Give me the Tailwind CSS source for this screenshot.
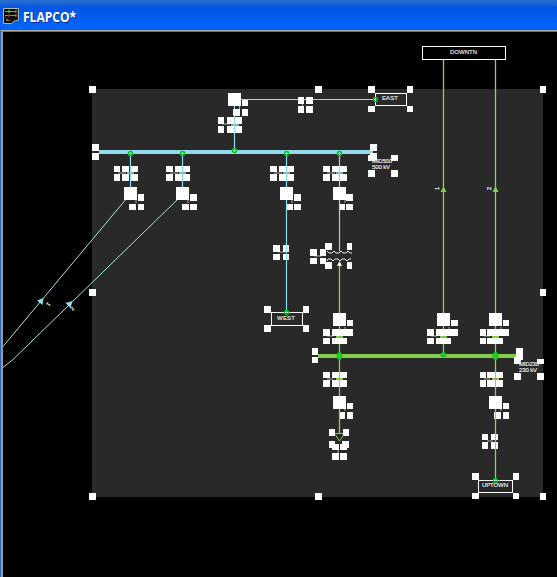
<!DOCTYPE html>
<html lang="en">
<head>
<meta charset="utf-8">
<title>FLAPCO*</title>
<script src="https://cdn.jsdelivr.net/npm/@tailwindcss/browser@4"></script>
</head>
<body class="w-[557px] h-[577px] overflow-hidden bg-black flex flex-col font-['Liberation_Sans',sans-serif]">
<header class="h-[30px] shrink-0 flex items-center pl-[3px] pt-[2px] bg-linear-to-b from-[#2a70ce] from-0% via-[#0355e4] via-25% to-[#0263fb] to-90%">
  <svg class="w-4 h-4" viewBox="0 0 16 16">
    <path d="M.5.5h15v11.500l-4 1-3 2.500h-8z" fill="#0c0c0a" stroke="#c9c7b4" stroke-width=".9"/>
    <path d="M2 3.500h11M2 7.500h11" stroke="#8b8b84"/>
    <path d="M12.500 2l1.500 1.500-1.500 1.500M12.500 6l1.500 1.500-1.500 1.500" stroke="#999" fill="none"/>
    <path d="M2 9l2.500 4M3 12.500h5" stroke="#5b5223"/>
    <circle cx="6" cy="3.500" r="1.200" fill="#00f020"/><circle cx="6" cy="7.500" r="1.200" fill="#f01818"/><circle cx="4.500" cy="12" r="1" fill="#b48a18"/>
  </svg>
  <h1 class="ml-1 mt-0.5 origin-left scale-x-[0.86] font-['Open_Sans','Noto_Sans',sans-serif] text-[14px] leading-4 font-bold text-white [text-shadow:1px_1px_0_#0a2f94]">FLAPCO*</h1>
</header>
<main class="flex-1 min-h-0 flex border-t border-l border-l-[#2b62bd] border-t-[#a9a8a0]">
<div class="flex-1 flex border-t border-l-2 border-l-[#a09b91] border-t-[#77746a]">
<svg class="w-[554px] h-[545px] block" viewBox="3 32 554 545" font-family="Liberation Sans, sans-serif" font-size="6" fill="#eee">
  <rect x="92" y="89" width="451" height="408" fill="#292929"/>
  <!-- 500 kV lines -->
  <g stroke="#8adcf0" fill="none" stroke-width="1.200">
    <path d="M234.500 152V99.500H376M130.500 152V190M182.500 152V190M286.500 152V313M339.500 152V251"/>
    <path d="M127 198L3 346.500M178 199L13 359.500 3 367.500" stroke="#a2e2da" stroke-width="1"/>
  </g>
  <rect x="99" y="150" width="274" height="4" fill="#91d9e8"/>
  <!-- 230 kV lines -->
  <path d="M443.500 60V355M495.500 60V480M339.500 264V433" stroke="#84d84e" stroke-width="1.300" fill="none"/>
  <rect x="318" y="354" width="200" height="4" fill="#83cb4c"/>
  <!-- station boxes -->
  <g stroke="#fff" fill="none" shape-rendering="crispEdges">
    <rect x="422.500" y="46.500" width="83" height="13" fill="#000"/>
    <rect x="375.500" y="93.500" width="31" height="12"/>
    <rect x="271.500" y="312.500" width="31" height="13"/>
    <rect x="478.500" y="480.500" width="34" height="12"/>
  </g>
  <!-- label leaders -->
  <path d="M222 124h8M302.500 102v4M239.500 106v3M118 173h8M170 173h8M274 173h8M327 173h8M136 200v3M188 200v3M292 200v3M345 200v3M278 252h7M314 256h8M327 336h6M327 379h6M431 336h6M484 336h6M484 379h6M345 327v2M449 327v2M501 327v2M345 408v3M501 408v3M487 441h6M338 450v3" stroke="#aaa" fill="none"/>
  <g fill="#fff" shape-rendering="crispEdges">
    <!-- selection handles -->
    <path d="M89 86h7v7h-7zM315 86h7v7h-7zM540 86h6v7h-6zM89 289h7v7h-7zM540 289h6v7h-6zM89 493h7v7h-7zM315 493h7v7h-7zM540 493h6v7h-6z"/>
    <!-- east branch -->
    <path d="M228 93h13v13h-13zM242 100h6v6h-6zM233 109h7v7h-7zM242 109h6v7h-6zM218 117h6v7h-6zM227 117h7v7h-7zM235 117h7v7h-7zM218 126h6v7h-6zM227 126h7v7h-7zM235 126h7v7h-7zM298 97h6v7h-6zM306 97h7v7h-7zM298 106h6v7h-6zM306 106h7v7h-7z"/>
    <path d="M368 86h7v7h-7zM407 86h6v7h-6zM368 106h7v6h-7zM407 106h6v6h-6z"/>
    <!-- 500 kV bus -->
    <path d="M92 144h7v7h-7zM92 153h7v7h-7zM370 144h7v7h-7zM370 153h7v7h-7zM368 155h7v6h-7zM391 155h7v6h-7zM368 170h7v7h-7zM391 170h7v7h-7z"/>
    <path d="M114 166h6v6h-6zM122 166h7v6h-7zM131 166h7v6h-7zM114 174h6v7h-6zM122 174h7v7h-7zM131 174h7v7h-7zM124 187h13v13h-13zM138 194h6v7h-6zM129 204h7v6h-7zM138 204h6v6h-6z"/>
    <path d="M166 166h7v6h-7zM175 166h7v6h-7zM183 166h7v6h-7zM166 174h7v7h-7zM175 174h7v7h-7zM183 174h7v7h-7zM176 187h13v13h-13zM190 194h7v7h-7zM182 204h7v6h-7zM190 204h7v6h-7z"/>
    <path d="M270 166h7v6h-7zM279 166h7v6h-7zM287 166h7v6h-7zM270 174h7v7h-7zM279 174h7v7h-7zM287 174h7v7h-7zM280 187h13v13h-13zM294 194h7v7h-7zM287 204h6v6h-6zM294 204h7v6h-7z"/>
    <path d="M323 166h7v6h-7zM332 166h7v6h-7zM340 166h7v6h-7zM323 174h7v7h-7zM332 174h7v7h-7zM340 174h7v7h-7zM333 187h13v13h-13zM346 194h7v7h-7zM340 204h5v6h-5zM346 204h7v6h-7z"/>
    <!-- west and transformer -->
    <path d="M273 245h7v7h-7zM283 245h6v7h-6zM273 254h7v6h-7zM283 254h6v6h-6zM264 306h7v7h-7zM303 306h6v7h-6zM264 325h7v7h-7zM303 325h6v7h-6z"/>
    <path d="M310 249h7v7h-7zM320 249h6v7h-6zM310 258h7v6h-7zM320 258h6v6h-6zM325 243h7v7h-7zM347 243h5v7h-5zM325 262h7v7h-7zM347 262h5v7h-5z"/>
    <!-- 230 kV upper breakers -->
    <path d="M333 313h13v13h-13zM347 320h6v6h-6zM323 329h7v7h-7zM332 329h21v7h-21zM323 338h7v6h-7zM332 338h15v6h-15z"/>
    <path d="M437 313h13v13h-13zM451 320h7v6h-7zM427 329h7v7h-7zM436 329h22v7h-22zM427 338h7v6h-7zM436 338h15v6h-15z"/>
    <path d="M489 313h13v13h-13zM503 320h6v6h-6zM480 329h6v7h-6zM487 329h22v7h-22zM480 338h6v6h-6zM487 338h16v6h-16z"/>
    <path d="M312 348h6v7h-6zM312 357h6v6h-6zM516 348h7v7h-7zM516 355h7v5h-7zM514 357h7v7h-7zM537 359h7v5h-7zM514 373h7v7h-7zM537 373h7v7h-7z"/>
    <!-- 230 kV lower breakers -->
    <path d="M323 372h7v6h-7zM332 372h7v6h-7zM340 372h7v6h-7zM323 380h7v7h-7zM332 380h7v7h-7zM340 380h7v7h-7zM333 396h13v13h-13zM347 403h6v6h-6zM340 412h5v7h-5zM347 412h6v7h-6z"/>
    <path d="M480 372h6v6h-6zM487 372h8v6h-8zM496 372h7v6h-7zM480 380h6v7h-6zM487 380h8v7h-8zM496 380h7v7h-7zM489 396h13v13h-13zM503 403h6v6h-6zM496 412h5v7h-5zM503 412h6v7h-6zM494 412h1v7h-1z"/>
    <path d="M329 429h6v7h-6zM343 429h6v7h-6zM329 441h6v7h-6zM342 441h7v7h-7zM332 444h7v6h-7zM340 444h7v6h-7zM332 453h7v7h-7zM340 453h7v7h-7z"/>
    <path d="M482 434h6v6h-6zM491 434h4v6h-4zM496 434h2v6h-2zM482 442h6v7h-6zM491 442h4v7h-4zM496 442h2v7h-2zM472 473h7v7h-7zM513 473h6v7h-6zM472 493h7v6h-7zM513 493h6v6h-6z"/>
  </g>
  <!-- breaker crossings -->
  <path d="M231 125h8M127 173h7M179 173h7M283 173h7M336 173h7" stroke="#91d9e8" stroke-width="1.500"/>
  <path d="M234.500 117v16M130.500 166v15M182.500 166v15M286.500 166v15M339.500 166v15M286.500 245v15" stroke="#8adcf0"/>
  <path d="M336 337h7M440 337h7M492 337h7M336 379h7M492 379h7" stroke="#83cb4c" stroke-width="2"/>
  <!-- transformer windings -->
  <path d="M327 251l2 2h3l2-2 2 2h3l2-2 2 2h3l2-2 2 2h2M327 261l1-2h3l2 2 2-2h3l2 2 2-2h3l2 2 2-2h2" stroke="#fff" fill="none" stroke-width=".9"/>
  <path d="M339.500 261l2.500 5h-5z" fill="#fff"/>
  <!-- load -->
  <path d="M335 433.500h8M335.500 435l4 6 4-6" fill="none" stroke="#7fcb50"/>
  <!-- flow arrows -->
  <path d="M443.500 186l3 6h-6zM495.500 186l3 6h-6z" fill="#83cb4c"/>
  <path d="M37 300.500l6.500-2.500-1 7zM65.500 303l7-2-2 7z" fill="#91e0ee"/>
  <!-- connection nodes -->
  <g fill="none" stroke="#00c81b" stroke-width="1.400">
    <circle cx="234.500" cy="150.500" r="2"/><circle cx="130.500" cy="153.500" r="2"/><circle cx="182.500" cy="153.500" r="2"/><circle cx="286.500" cy="153.500" r="2"/><circle cx="339.500" cy="153.500" r="2"/><circle cx="375.500" cy="99.500" r="2"/><circle cx="286.500" cy="312.500" r="2"/><circle cx="495.500" cy="480.500" r="2"/>
    <circle cx="443.500" cy="354.700" r="2" fill="#35c832"/><ellipse cx="339.500" cy="356" rx="2" ry="3.300" fill="#35c832"/><ellipse cx="495.500" cy="356" rx="2.300" ry="3.300" fill="#35c832"/>
  </g>
  <!-- labels -->
  <g stroke="#eee" stroke-width=".15">
  <text x="450" y="54" textLength="27">DOWNTN</text>
  <text x="382" y="100" textLength="16">EAST</text>
  <text x="277" y="320" textLength="18">WEST</text>
  <text x="482" y="487" textLength="26">UPTOWN</text>
  <text x="372" y="163" textLength="20">MID500</text>
  <text x="372" y="169" textLength="18">500 kV</text>
  <text x="519" y="366" textLength="20">MID230</text>
  <text x="519" y="372" textLength="18">230 kV</text>
  </g>
  <g font-size="5.500" stroke="#eee" stroke-width=".2">
    <text transform="translate(438.500 190) rotate(-90)">1</text>
    <text transform="translate(491 190) rotate(-90)">2</text>
    <text transform="translate(48 302) rotate(130)">1</text>
    <text transform="translate(72.500 311) rotate(-45)">2</text>
  </g>
</svg>
</div>
</main>
</body>
</html>
